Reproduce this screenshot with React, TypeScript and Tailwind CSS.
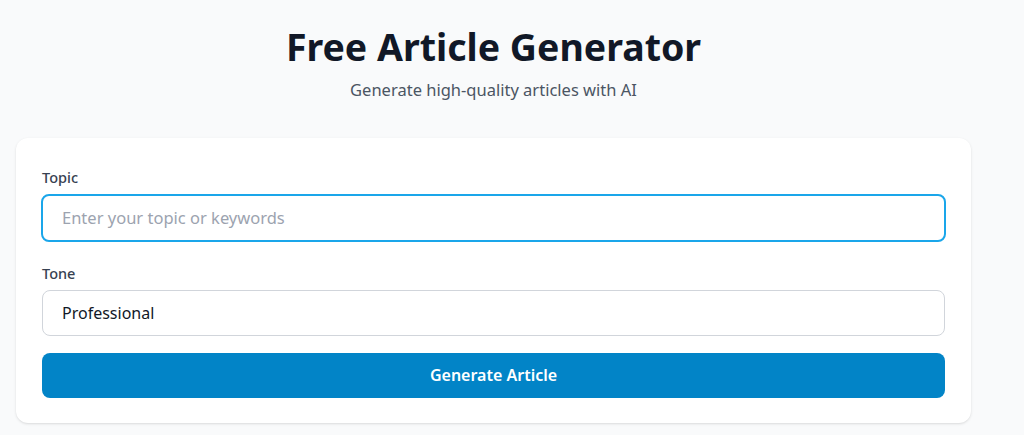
export default function App() {
  return (
    <div
      className="min-h-[435px] w-full bg-[#f9fafb]"
      style={{ fontFamily: '"Noto Sans", "Open Sans", sans-serif' }}
    >
      <div className="w-[987px] px-4 pt-[22px]">
        <div className="mb-[35px] text-center">
          <h1 className="text-[37.5px] font-bold leading-[50px] text-[#111827]">Free Article Generator</h1>
          <p className="mt-[6px] text-[16.5px] text-[#4b5563]">Generate high-quality articles with AI</p>
        </div>
        <div className="rounded-xl bg-white px-[26px] pb-[25px] pt-[29px] shadow-sm">
          <label className="mb-[7px] block text-[14.5px] font-medium leading-5 text-[#374151]">Topic</label>
          <input
            autoFocus
            placeholder="Enter your topic or keywords"
            className="-mx-px block h-[48px] w-[calc(100%+2px)] rounded-lg border-2 border-[#1aa6ea] bg-white px-[19px] text-[16.5px] text-[#111827] outline-none placeholder:text-[#9ca3af]"
          />
          <label className="mb-[7px] mt-[21px] block text-[14.5px] font-medium leading-5 text-[#374151]">Tone</label>
          <div className="flex h-[46px] w-full items-center rounded-lg border border-[#d1d5db] px-[19px] text-base text-[#111827]">
            Professional
          </div>
          <button className="mt-[17px] block h-[45px] w-full rounded-lg bg-[#0284c7] text-base font-semibold text-white">
            Generate Article
          </button>
        </div>
      </div>
    </div>
  );
}
